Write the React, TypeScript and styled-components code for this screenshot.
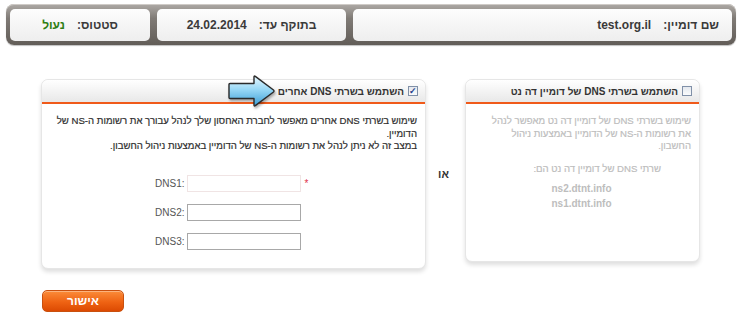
import styled, { createGlobalStyle } from "styled-components";

const GlobalStyle = createGlobalStyle`
  body {
    margin: 0;
    background: #fff;
    font-family: "Liberation Sans", Arial, sans-serif;
  }
`;

const dnsFields = [
  { label: "DNS1:", required: true },
  { label: "DNS2:", required: false },
  { label: "DNS3:", required: false },
];

const Arrow = () => (
  <ArrowSvg width="50" height="34" viewBox="0 0 50 34">
    <defs>
      <linearGradient id="arrowFill" x1="0" y1="0" x2="0" y2="1">
        <stop offset="0" stopColor="#e8f8fe" />
        <stop offset="0.45" stopColor="#98d8f6" />
        <stop offset="1" stopColor="#3c9fd6" />
      </linearGradient>
    </defs>
    <path
      d="M3 9.5 Q2 9.5 2 10.5 L2 23.5 Q2 24.5 3 24.5 L27 24.5 L27 31 Q27 32.5 28.3 31.6 L46.5 18 Q47.5 17 46.5 16 L28.3 2.4 Q27 1.5 27 3 L27 9.5 Z"
      fill="url(#arrowFill)"
      stroke="#2a2a2a"
      strokeWidth="1.4"
      strokeLinejoin="round"
    />
  </ArrowSvg>
);

export default function App() {
  return (
    <Page>
      <GlobalStyle />
      <InfoBar>
        <InfoCell $width={379} $align="flex-start">
          <InfoLabel>שם דומיין:</InfoLabel>
          <InfoValue>test.org.il</InfoValue>
        </InfoCell>
        <InfoCell $width={189}>
          <InfoLabel>בתוקף עד:</InfoLabel>
          <InfoValue>24.02.2014</InfoValue>
        </InfoCell>
        <InfoCell $width={140}>
          <InfoLabel>סטטוס:</InfoLabel>
          <InfoValue $color="#2e7d12">נעול</InfoValue>
        </InfoCell>
      </InfoBar>

      <Columns>
        <Panel $width={235} $padBottom={51}>
          <PanelHeader>
            <CheckBox />
            <HeaderTitle>השתמש בשרתי DNS של דומיין דה נט</HeaderTitle>
          </PanelHeader>
          <PanelBody $muted>
            <Paragraph $size={9.6}>
              שימוש בשרתי DNS של דומיין דה נט מאפשר לנהל
              <br />
              את רשומות ה-NS של הדומיין באמצעות ניהול
              <br />
              החשבון.
            </Paragraph>
            <ServersTitle>שרתי DNS של דומיין דה נט הם:</ServersTitle>
            <ServerList>
              <ServerName>ns2.dtnt.info</ServerName>
              <ServerName>ns1.dtnt.info</ServerName>
            </ServerList>
          </PanelBody>
        </Panel>

        <OrLabel>או</OrLabel>

        <Panel $width={385} $padBottom={18}>
          <Arrow />
          <PanelHeader>
            <CheckBox $checked>✓</CheckBox>
            <HeaderTitle>השתמש בשרתי DNS אחרים</HeaderTitle>
          </PanelHeader>
          <PanelBody>
            <Paragraph $size={9.6}>
              שימוש בשרתי DNS אחרים מאפשר לחברת האחסון שלך לנהל עבורך את רשומות
              ה-NS של
              <br />
              הדומיין.
              <br />
              במצב זה לא ניתן לנהל את רשומות ה-NS של הדומיין באמצעות ניהול
              החשבון.
            </Paragraph>
            <FieldList>
              {dnsFields.map((field) => (
                <FieldRow key={field.label}>
                  <FieldLabel>{field.label}</FieldLabel>
                  <FieldInput $soft={field.required} />
                  <Required>{field.required ? "*" : ""}</Required>
                </FieldRow>
              ))}
            </FieldList>
          </PanelBody>
        </Panel>
      </Columns>

      <Footer>
        <SubmitButton>אישור</SubmitButton>
      </Footer>
    </Page>
  );
}

const Page = styled.div`
  direction: rtl;
  width: 742px;
  padding-top: 4px;
`;

const InfoBar = styled.div`
  display: flex;
  gap: 7px;
  margin: 0 6px;
  padding: 5px 4px 4px;
  border-radius: 8px;
  background: linear-gradient(#aeaaa6, #807b76 35%, #625d58);
  box-shadow: inset 0 1px 0 #cfcbc7, 0 1px 1px rgba(0, 0, 0, 0.25);
`;

const InfoCell = styled.div<{ $width: number; $align?: string }>`
  width: ${(p) => p.$width}px;
  height: 32px;
  box-sizing: border-box;
  display: flex;
  align-items: center;
  justify-content: ${(p) => p.$align || "center"};
  padding: 0 13px;
  border-radius: 5px;
  background: linear-gradient(#fdfdfd, #eeeeee);
  font-size: 12px;
  font-weight: bold;
  color: #3a3a3a;
`;

const InfoLabel = styled.span`
  margin-left: 12px;
`;

const InfoValue = styled.span<{ $color?: string }>`
  color: ${(p) => p.$color || "#3a3a3a"};
`;

const Columns = styled.div`
  display: flex;
  align-items: flex-start;
  margin: 34px 42px 0 41px;
`;

const Panel = styled.div<{ $width: number; $padBottom: number }>`
  position: relative;
  width: ${(p) => p.$width}px;
  box-sizing: border-box;
  padding-bottom: ${(p) => p.$padBottom}px;
  background: #fff;
  border: 1px solid #e6e6e6;
  border-radius: 7px;
  box-shadow: 0 3px 4px rgba(0, 0, 0, 0.13);
`;

const ArrowSvg = styled.svg`
  position: absolute;
  top: -6px;
  left: 185px;
  filter: drop-shadow(1px 2px 1px rgba(0, 0, 0, 0.3));
`;

const PanelHeader = styled.div`
  height: 22px;
  display: flex;
  align-items: center;
  gap: 4px;
  padding: 0 7px;
  border-radius: 7px 7px 0 0;
  background: linear-gradient(#ffffff, #e8e8e8);
  border-bottom: 2px solid #f05a1a;
`;

const CheckBox = styled.span<{ $checked?: boolean }>`
  width: 10px;
  height: 10px;
  box-sizing: border-box;
  border: 1px solid #8090a8;
  background: linear-gradient(#e4e8ee, #fafbfc);
  display: flex;
  align-items: center;
  justify-content: center;
  font-size: 9px;
  font-weight: bold;
  line-height: 1;
  color: #23408a;
`;

const HeaderTitle = styled.span`
  font-size: 10px;
  font-weight: bold;
  color: #333;
`;

const PanelBody = styled.div<{ $muted?: boolean }>`
  padding: 11px 8px 0 6px;
  color: ${(p) => (p.$muted ? "#bdbdbd" : "#2e2e2e")};
`;

const Paragraph = styled.p<{ $size: number }>`
  margin: 0;
  white-space: nowrap;
  font-size: ${(p) => p.$size}px;
  line-height: 12.5px;
  -webkit-text-stroke: 0.2px currentColor;
`;

const ServersTitle = styled.p`
  margin: 10px 30px 0 0;
  font-size: 9.6px;
  line-height: 12.5px;
  -webkit-text-stroke: 0.2px currentColor;
`;

const ServerList = styled.div`
  display: flex;
  flex-direction: column;
  align-items: center;
  gap: 2px;
  margin-top: 7px;
`;

const ServerName = styled.span`
  font-size: 10px;
  font-weight: bold;
  line-height: 13px;
  direction: ltr;
`;

const OrLabel = styled.div`
  width: 39px;
  align-self: center;
  text-align: center;
  font-size: 11px;
  font-weight: bold;
  color: #333;
  padding-right: 4px;
  box-sizing: border-box;
`;

const FieldList = styled.div`
  display: flex;
  flex-direction: column;
  align-items: center;
  gap: 12px;
  margin-top: 22px;
`;

const FieldRow = styled.div`
  direction: ltr;
  display: flex;
  align-items: center;
`;

const FieldLabel = styled.label`
  width: 34px;
  margin-right: 2px;
  text-align: right;
  font-size: 10px;
  color: #555;
`;

const FieldInput = styled.input<{ $soft?: boolean }>`
  width: 114px;
  height: 17px;
  box-sizing: border-box;
  margin: 0;
  border: 1px solid ${(p) => (p.$soft ? "#f0e4e4" : "#a8a8a8")};
  background: #fff;
`;

const Required = styled.span`
  width: 10px;
  margin-left: 4px;
  font-size: 10px;
  color: #e0304a;
`;

const Footer = styled.div`
  display: flex;
  justify-content: flex-end;
  padding-left: 42px;
  margin-top: 21px;
`;

const SubmitButton = styled.button`
  width: 82px;
  height: 22px;
  border: 1px solid #c9500f;
  border-radius: 5px;
  background: linear-gradient(#fb8c3a, #ef6313 55%, #dc4a02);
  color: #fff;
  font-family: "Liberation Sans", Arial, sans-serif;
  font-size: 12px;
  font-weight: bold;
  box-shadow: inset 0 1px 0 rgba(255, 255, 255, 0.35);
`;
